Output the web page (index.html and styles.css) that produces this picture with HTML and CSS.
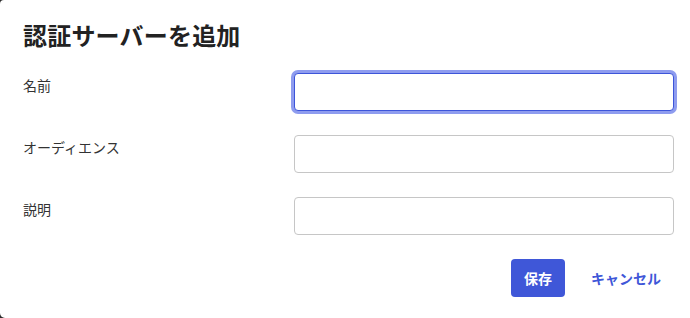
FILE: index.html
```html
<!DOCTYPE html>
<html lang="ja">
<head>
<meta charset="utf-8">
<link rel="stylesheet" href="styles.css">
</head>
<body>
<div class="dialog">
  <h1 class="title">認証サーバーを追加</h1>
  <form class="form">
    <label class="label" for="f-name">名前</label>
    <input class="input input-focus" id="f-name" type="text">
    <label class="label" for="f-aud">オーディエンス</label>
    <input class="input" id="f-aud" type="text">
    <label class="label" for="f-desc">説明</label>
    <input class="input" id="f-desc" type="text">
  </form>
  <div class="actions">
    <button class="btn btn-primary" type="button">保存</button>
    <button class="btn btn-link" type="button">キャンセル</button>
  </div>
</div>
</body>
</html>
```

FILE: styles.css
```css
html, body {
  margin: 0;
  padding: 0;
  background: #2b2b2b;
  width: 690px;
  height: 318px;
  overflow: hidden;
}
.dialog {
  box-sizing: border-box;
  width: 690px;
  height: 318px;
  background: #ffffff;
  border-radius: 4px 0 0 5px;
  padding: 19px 16px 0 23px;
  font-family: "Noto Sans CJK JP", "Noto Sans", sans-serif;
  color: #222222;
}
.title {
  margin: 0;
  font-size: 24px;
  line-height: 32px;
  font-weight: 700;
  letter-spacing: 0.2px;
  color: #222222;
}
.form {
  margin-top: 22px;
  display: grid;
  grid-template-columns: 271px 380px;
  row-gap: 24px;
}
.label {
  font-size: 14px;
  line-height: 20px;
  padding-top: 2px;
  color: #333333;
}
.input {
  box-sizing: border-box;
  height: 38px;
  width: 380px;
  margin: 0;
  border: 1px solid #c6c6c6;
  border-radius: 4px;
  background: #ffffff;
  outline: none;
  font: inherit;
}
.input-focus {
  border-color: #3d55d9;
  box-shadow: 0 0 0 3px #8e9cef;
}
.actions {
  margin-top: 24px;
  display: flex;
  justify-content: flex-end;
  gap: 12px;
}
.btn {
  height: 38px;
  border: none;
  border-radius: 4px;
  font-family: "Noto Sans CJK JP", "Noto Sans", sans-serif;
  font-size: 14px;
  font-weight: 700;
  cursor: pointer;
}
.btn-primary {
  background: #3f57d8;
  color: #ffffff;
  padding: 0 13px;
  width: 54px;
}
.btn-link {
  background: transparent;
  color: #3f57d8;
  padding: 0 13px 0 14px;
}
```
